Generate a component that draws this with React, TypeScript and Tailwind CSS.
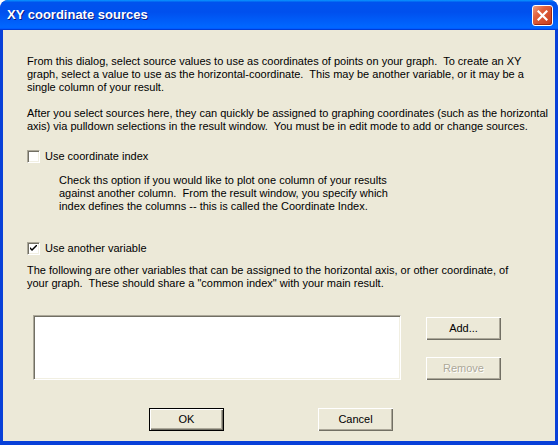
const ui = { fontFamily: '"Liberation Sans", Arial, sans-serif' };

function CloseButton() {
  return (
    <div className="flex h-[21px] w-[21px] items-center justify-center rounded-[3px] border border-white bg-[linear-gradient(135deg,#f0a080_0%,#e0603c_35%,#c73c1c_100%)] shadow-[inset_-1px_-1px_0_#a02810]">
      <svg width="11" height="11" viewBox="0 0 11 11">
        <path d="M1.5 1.5 L9.5 9.5 M9.5 1.5 L1.5 9.5" stroke="#fff" strokeWidth="2.2" strokeLinecap="square" />
      </svg>
    </div>
  );
}

function CheckBox({ checked }: { checked?: boolean }) {
  return (
    <div className="flex h-[13px] w-[13px] shrink-0 items-center justify-center border border-b-white border-l-[#aca899] border-r-white border-t-[#aca899] bg-white shadow-[inset_1px_1px_0_#716f64,inset_-1px_-1px_0_#f1efe2]">
      {checked ? (
        <svg width="7" height="7" viewBox="0 0 7 7">
          <path d="M0 2 L0 4 L2 6 L7 1 L7 -1 L2 4 Z" fill="#000" />
        </svg>
      ) : null}
    </div>
  );
}

function PushButton({ label, isDefault, disabled }: { label: string; isDefault?: boolean; disabled?: boolean }) {
  return (
    <div
      className={`flex h-[23px] w-[75px] items-center justify-center bg-[#ece9d8] text-[11px] ${
        isDefault
          ? "border border-black shadow-[inset_1px_1px_0_#fff,inset_-1px_-1px_0_#716f64,inset_-2px_-2px_0_#aca899]"
          : "shadow-[inset_1px_1px_0_#fff,inset_-1px_-1px_0_#716f64,inset_-2px_-2px_0_#aca899]"
      } ${disabled ? "text-[#aca899] [text-shadow:1px_1px_0_#fff]" : "text-black"}`}
    >
      {label}
    </div>
  );
}

function Lines({ lines, className = "" }: { lines: string[]; className?: string }) {
  return (
    <div className={`text-[11px] leading-[13px] text-black ${className}`}>
      {lines.map((line) => (
        <div key={line} className="whitespace-pre">
          {line}
        </div>
      ))}
    </div>
  );
}

export default function App() {
  return (
    <div className="h-[445px] w-[558px] overflow-hidden rounded-t-[8px] bg-[#0840d8]" style={ui}>
      {/* caption */}
      <div className="flex h-[30px] items-center justify-between rounded-t-[8px] bg-[linear-gradient(180deg,#0997ff,#0053ee_8%,#0050ee_40%,#0066ff_88%,#0066ff_93%,#005bff_95%,#003dd7_96%,#003dd7)] pl-[7px] pr-[5px]">
        <span className="text-[13px] font-bold text-white [text-shadow:1px_1px_0_#0a1883]">XY coordinate sources</span>
        <CloseButton />
      </div>

      {/* client area */}
      <div className="mx-[3px] h-[411px] bg-[#ece9d8] pl-[24px]">
        <div className="pt-[25px]">
          <Lines
            lines={[
              "From this dialog, select source values to use as coordinates of points on your graph.  To create an XY",
              "graph, select a value to use as the horizontal-coordinate.  This may be another variable, or it may be a",
              "single column of your result.",
            ]}
          />
        </div>
        <Lines
          className="mt-[13px]"
          lines={[
            "After you select sources here, they can quickly be assigned to graphing coordinates (such as the horizontal",
            "axis) via pulldown selections in the result window.  You must be in edit mode to add or change sources.",
          ]}
        />

        <div className="mt-[17px] flex items-center gap-[5px]">
          <CheckBox />
          <span className="text-[11px] leading-[13px]">Use coordinate index</span>
        </div>
        <Lines
          className="mt-[11px] pl-[32px]"
          lines={[
            "Check ths option if you would like to plot one column of your results",
            "against another column.  From the result window, you specify which",
            "index defines the columns -- this is called the Coordinate Index.",
          ]}
        />

        <div className="mt-[29px] flex items-center gap-[5px]">
          <CheckBox checked />
          <span className="text-[11px] leading-[13px]">Use another variable</span>
        </div>
        <Lines
          className="mt-[9px]"
          lines={[
            "The following are other variables that can be assigned to the horizontal axis, or other coordinate, of",
            'your graph.  These should share a "common index" with your main result.',
          ]}
        />

        <div className="mt-[25px] flex">
          <div className="ml-[6px] h-[65px] w-[368px] border border-b-white border-l-[#aca899] border-r-white border-t-[#aca899] bg-white shadow-[inset_1px_1px_0_#716f64,inset_-1px_-1px_0_#f1efe2]" />
          <div className="ml-[25px] mt-[2px] flex flex-col gap-[17px]">
            <PushButton label="Add..." />
            <PushButton label="Remove" disabled />
          </div>
        </div>

        <div className="mt-[28px] flex">
          <div className="ml-[122px]">
            <PushButton label="OK" isDefault />
          </div>
          <div className="ml-[94px]">
            <PushButton label="Cancel" />
          </div>
        </div>
      </div>
    </div>
  );
}
